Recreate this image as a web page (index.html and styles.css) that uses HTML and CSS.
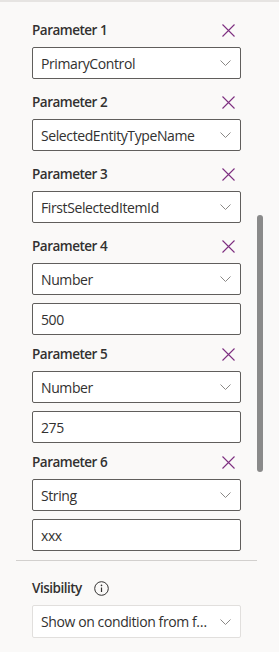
FILE: index.html
```html
<!DOCTYPE html>
<html lang="en">

<head>
    <meta charset="UTF-8">
    <meta name="viewport" content="width=device-width, initial-scale=1.0">
    <title>Parameters</title>
    <link rel="stylesheet" href="styles.css">
</head>

<body>
    <div class="panel">
        <div class="params">
            <div class="param">
                <div class="param-head">
                    <span class="param-label">Parameter 1</span>
                    <button class="remove" type="button" aria-label="Remove parameter 1">
                        <svg width="13" height="13" viewBox="0 0 13 13"><path d="M0.5 0.5L12.5 12.5M12.5 0.5L0.5 12.5" /></svg>
                    </button>
                </div>
                <div class="dropdown">
                    <span class="dropdown-text">PrimaryControl</span>
                    <svg class="chevron" width="11" height="6" viewBox="0 0 11 6"><path d="M0.5 0.5L5.5 5.5L10.5 0.5" /></svg>
                </div>
            </div>

            <div class="param">
                <div class="param-head">
                    <span class="param-label">Parameter 2</span>
                    <button class="remove" type="button" aria-label="Remove parameter 2">
                        <svg width="13" height="13" viewBox="0 0 13 13"><path d="M0.5 0.5L12.5 12.5M12.5 0.5L0.5 12.5" /></svg>
                    </button>
                </div>
                <div class="dropdown">
                    <span class="dropdown-text">SelectedEntityTypeName</span>
                    <svg class="chevron" width="11" height="6" viewBox="0 0 11 6"><path d="M0.5 0.5L5.5 5.5L10.5 0.5" /></svg>
                </div>
            </div>

            <div class="param">
                <div class="param-head">
                    <span class="param-label">Parameter 3</span>
                    <button class="remove" type="button" aria-label="Remove parameter 3">
                        <svg width="13" height="13" viewBox="0 0 13 13"><path d="M0.5 0.5L12.5 12.5M12.5 0.5L0.5 12.5" /></svg>
                    </button>
                </div>
                <div class="dropdown">
                    <span class="dropdown-text">FirstSelectedItemId</span>
                    <svg class="chevron" width="11" height="6" viewBox="0 0 11 6"><path d="M0.5 0.5L5.5 5.5L10.5 0.5" /></svg>
                </div>
            </div>

            <div class="param with-value">
                <div class="param-head">
                    <span class="param-label">Parameter 4</span>
                    <button class="remove" type="button" aria-label="Remove parameter 4">
                        <svg width="13" height="13" viewBox="0 0 13 13"><path d="M0.5 0.5L12.5 12.5M12.5 0.5L0.5 12.5" /></svg>
                    </button>
                </div>
                <div class="dropdown">
                    <span class="dropdown-text">Number</span>
                    <svg class="chevron" width="11" height="6" viewBox="0 0 11 6"><path d="M0.5 0.5L5.5 5.5L10.5 0.5" /></svg>
                </div>
                <input class="value" type="text" value="500">
            </div>

            <div class="param with-value">
                <div class="param-head">
                    <span class="param-label">Parameter 5</span>
                    <button class="remove" type="button" aria-label="Remove parameter 5">
                        <svg width="13" height="13" viewBox="0 0 13 13"><path d="M0.5 0.5L12.5 12.5M12.5 0.5L0.5 12.5" /></svg>
                    </button>
                </div>
                <div class="dropdown">
                    <span class="dropdown-text">Number</span>
                    <svg class="chevron" width="11" height="6" viewBox="0 0 11 6"><path d="M0.5 0.5L5.5 5.5L10.5 0.5" /></svg>
                </div>
                <input class="value" type="text" value="275">
            </div>

            <div class="param with-value">
                <div class="param-head">
                    <span class="param-label">Parameter 6</span>
                    <button class="remove" type="button" aria-label="Remove parameter 6">
                        <svg width="13" height="13" viewBox="0 0 13 13"><path d="M0.5 0.5L12.5 12.5M12.5 0.5L0.5 12.5" /></svg>
                    </button>
                </div>
                <div class="dropdown">
                    <span class="dropdown-text">String</span>
                    <svg class="chevron" width="11" height="6" viewBox="0 0 11 6"><path d="M0.5 0.5L5.5 5.5L10.5 0.5" /></svg>
                </div>
                <input class="value" type="text" value="xxx">
            </div>
        </div>

        <hr class="divider">

        <div class="visibility">
            <div class="param-head">
                <span class="param-label">Visibility</span>
                <svg class="info" width="15" height="15" viewBox="0 0 15 15">
                    <circle cx="7.5" cy="7.5" r="6.8" />
                    <path d="M7.5 6.5V11" />
                    <circle class="dot" cx="7.5" cy="4.4" r="0.8" />
                </svg>
            </div>
            <div class="dropdown light">
                <span class="dropdown-text">Show on condition from formula</span>
                <svg class="chevron" width="11" height="6" viewBox="0 0 11 6"><path d="M0.5 0.5L5.5 5.5L10.5 0.5" /></svg>
            </div>
        </div>

        <div class="scrollbar"></div>
    </div>
</body>

</html>
```

FILE: styles.css
```css
body {
    margin: 0;
    font-family: "Segoe UI", "Open Sans", sans-serif;
    font-size: 14px;
    letter-spacing: -0.4px;
    color: #323130;
    background-color: #faf9f8;
}

.panel {
    position: relative;
    height: 650px;
    border-top: 2px solid #e6e4e2;
    overflow: hidden;
}

.params {
    padding: 18px 0 0 32px;
}

.param {
    width: 209px;
    margin-bottom: 13px;
}

.param.with-value {
    margin-bottom: 9px;
}

.param-head {
    display: flex;
    align-items: center;
    height: 20px;
    line-height: 20px;
    margin-bottom: 7px;
}

.param-label {
    flex: 1;
    font-size: 13.5px;
    font-weight: 600;
    letter-spacing: -0.5px;
}

.remove {
    display: flex;
    align-items: center;
    justify-content: center;
    background: none;
    border: none;
    padding: 0;
    margin-right: 6px;
    cursor: pointer;
}

.remove svg path {
    stroke: #7d2f80;
    stroke-width: 1.1;
    fill: none;
}

.dropdown {
    display: flex;
    align-items: center;
    box-sizing: border-box;
    height: 32px;
    padding: 0 9px 0 8px;
    background-color: #fff;
    border: 1px solid #605e5c;
    border-radius: 2px;
}

.dropdown.light {
    height: 33px;
    border-color: #e1dfdd;
}

.dropdown-text {
    flex: 1;
    white-space: nowrap;
    overflow: hidden;
    text-overflow: ellipsis;
    padding-right: 10px;
}

.chevron path {
    stroke: #8a8886;
    stroke-width: 1;
    fill: none;
}

.value {
    display: block;
    box-sizing: border-box;
    width: 100%;
    height: 32px;
    margin-top: 8px;
    padding: 0 8px;
    font-family: inherit;
    font-size: 14px;
    letter-spacing: -0.4px;
    color: #323130;
    background-color: #fff;
    border: 1px solid #605e5c;
    border-radius: 2px;
}

.divider {
    width: 241px;
    margin: 7px 0 0 16px;
    border: none;
    border-top: 1px solid #d2d0ce;
}

.visibility {
    width: 209px;
    padding: 17px 0 0 32px;
}

.visibility .param-label {
    flex: none;
}

.info {
    margin-left: 12px;
}

.info circle {
    stroke: #323130;
    stroke-width: 1;
    fill: none;
}

.info path {
    stroke: #323130;
    stroke-width: 1.2;
}

.info .dot {
    fill: #323130;
    stroke: none;
}

.scrollbar {
    position: absolute;
    left: 257px;
    top: 213px;
    width: 6px;
    height: 257px;
    border-radius: 3px;
    background-color: #8a8a8a;
}
```
